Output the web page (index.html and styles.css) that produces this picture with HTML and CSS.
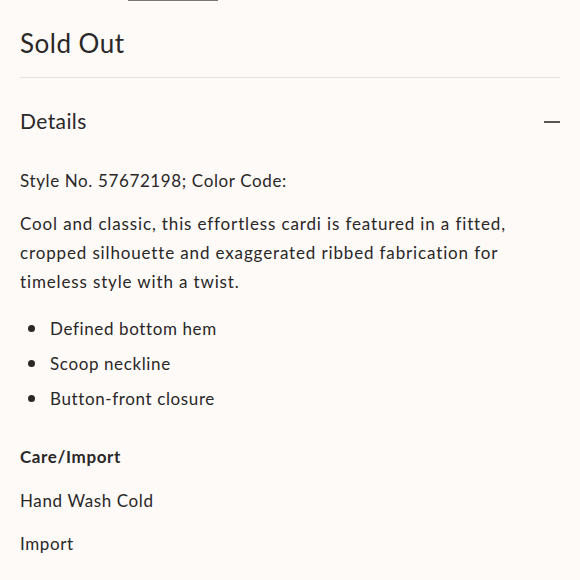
FILE: index.html
```html
<!DOCTYPE html>
<html>
<head>
<meta charset="utf-8">
<link rel="stylesheet" href="styles.css">
</head>
<body>
<div class="page">
  <div class="topbar"><span class="tab"></span></div>
  <h1 class="status">Sold Out</h1>
  <section class="accordion">
    <div class="acc-head">
      <h2 class="acc-title">Details</h2>
      <span class="minus"></span>
    </div>
    <div class="acc-body">
      <p class="style-no">Style No. 57672198; Color Code:</p>
      <p class="desc">Cool and classic, this effortless cardi is featured in a fitted, cropped silhouette and exaggerated ribbed fabrication for timeless style with a twist.</p>
      <ul class="bullets">
        <li>Defined bottom hem</li>
        <li>Scoop neckline</li>
        <li>Button-front closure</li>
      </ul>
      <h3 class="care-title">Care/Import</h3>
      <p class="care">Hand Wash Cold</p>
      <p class="care">Import</p>
    </div>
  </section>
</div>
</body>
</html>
```

FILE: styles.css
```css
html, body {
  margin: 0;
  padding: 0;
  background: #fdfaf8;
}
body {
  font-family: "Lato", "Liberation Sans", sans-serif;
  color: #2a2727;
  letter-spacing: 0.62px;
}
.page {
  padding: 0 20px;
}
.topbar {
  height: 1px;
  padding-left: 108px;
}
.tab {
  display: block;
  width: 90px;
  height: 1px;
  background: #7a7777;
}
.status {
  margin: 0;
  font-weight: 400;
  font-size: 26px;
  letter-spacing: 0.5px;
  line-height: 30px;
  padding-top: 27px;
  padding-bottom: 19px;
  border-bottom: 1px solid #e6e1de;
}
.acc-head {
  display: flex;
  align-items: center;
  justify-content: space-between;
  height: 88px;
}
.acc-title {
  margin: 0 0 4px;
  font-weight: 400;
  font-size: 21px;
  letter-spacing: 0.4px;
}
.minus {
  width: 16px;
  height: 2px;
  background: #555;
}
.acc-body p {
  margin: 0;
}
.style-no {
  font-size: 17px;
  line-height: 29px;
}
.desc {
  font-size: 17px;
  line-height: 29px;
  letter-spacing: 0.86px;
  margin-top: 14px !important;
}
.bullets {
  list-style: none;
  margin: 15px 0 0;
  padding: 0;
  font-size: 17px;
  line-height: 35px;
}
.bullets li {
  display: flex;
  align-items: center;
}
.bullets li::before {
  content: "";
  width: 7px;
  height: 7px;
  border-radius: 50%;
  background: #2a2727;
  margin-left: 8px;
  margin-right: 15px;
}
.care-title {
  margin: 26px 0 0;
  font-size: 17px;
  font-weight: 700;
  line-height: 30px;
}
.care {
  font-size: 17px;
  line-height: 29px;
  margin-top: 14px !important;
}
```
